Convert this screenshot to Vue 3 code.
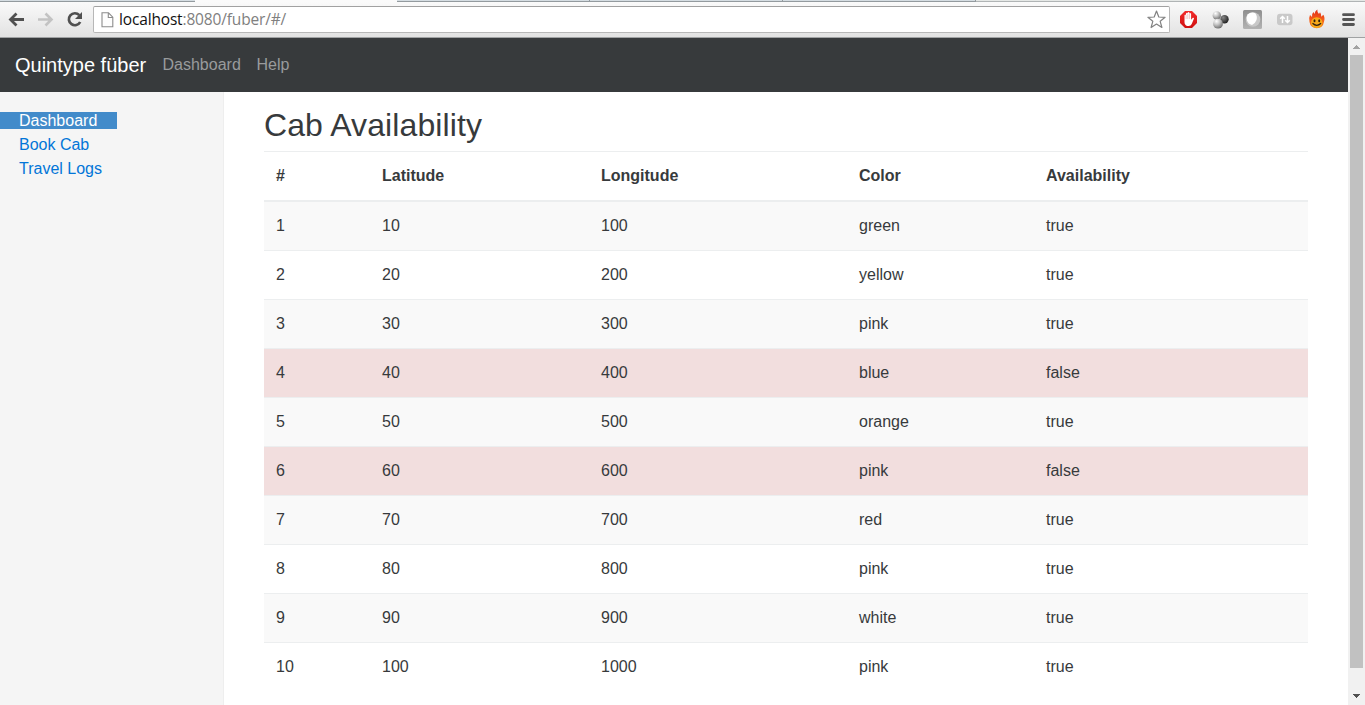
<script setup>
const columns = ['#', 'Latitude', 'Longitude', 'Color', 'Availability']
const colors = ['green', 'yellow', 'pink', 'blue', 'orange', 'pink', 'red', 'pink', 'white', 'pink']
const cabs = colors.map((color, i) => ({
  id: i + 1,
  lat: (i + 1) * 10,
  lng: (i + 1) * 100,
  color,
  available: color !== 'blue' && i !== 5
}))
const links = ['Dashboard', 'Book Cab', 'Travel Logs']
</script>

<template>
  <div class="window">
    <header class="chrome">
      <div class="tabs"><i class="tab first"></i><i class="gap"></i><i class="tab second"></i><i class="tab third"></i><i class="tab fourth"></i><i class="rest"></i></div>
      <div class="toolbar">
        <svg class="nav-icons" width="93" height="35" viewBox="0 3 93 35">
          <path d="M24 19.500H11.500M16.500 13.500l-6 6 6 6" fill="none" stroke="#505050" stroke-width="2.800" />
          <path d="M38 19.500h12.500M45.500 13.500l6 6-6 6" fill="none" stroke="#c3c3c3" stroke-width="2.600" />
          <path d="M79.300 15.200A6 6 0 1 0 80.200 22" fill="none" stroke="#505050" stroke-width="2.700" />
          <path d="M82 12v7h-7z" fill="#505050" />
        </svg>
        <div class="address">
          <svg class="page" width="13" height="16" viewBox="0 0 13 16">
            <path d="M1 .8h6.500l4.300 4.400v9.500H1zM7.300.8v4.700h4.500" fill="#fdfdfd" stroke="#8c8c8c" stroke-width="1.100" />
          </svg>
          <span class="url"><b>localhost</b>:8080/fuber/#/</span>
          <svg class="star" width="20" height="19" viewBox="0 0 20 19">
            <path d="M10.500 1l2.300 6 6.300.3-4.900 4 1.700 6.200-5.400-3.500-5.400 3.500 1.700-6.200-4.900-4 6.300-.3z" fill="#fff" stroke="#828282" stroke-width="1.200" stroke-linejoin="round" />
          </svg>
        </div>
        <svg class="extensions" width="195" height="35" viewBox="1170 3 195 35">
          <defs>
            <radialGradient id="ball" cx=".35" cy=".25" r=".8"><stop offset="0" stop-color="#fff" /><stop offset=".45" stop-color="#c4c4c4" /><stop offset="1" stop-color="#686868" /></radialGradient>
            <radialGradient id="dark" cx=".35" cy=".3" r=".7"><stop offset="0" stop-color="#888" /><stop offset="1" stop-color="#222" /></radialGradient>
            <linearGradient id="flame" x2="0" y2="1"><stop offset="0" stop-color="#e02c18" /><stop offset=".5" stop-color="#f3591b" /><stop offset="1" stop-color="#f58a16" /></linearGradient>
            <linearGradient id="tile" x2="0" y2="1"><stop offset="0" stop-color="#8f8f8f" /><stop offset="1" stop-color="#b3b3b3" /></linearGradient>
            <linearGradient id="stop" x2="0" y2="1"><stop offset="0" stop-color="#f22b2b" /><stop offset="1" stop-color="#cf1111" /></linearGradient>
          </defs>
          <path d="M1185 11h7l5 5v7l-5 5h-7l-5-5v-7z" fill="url(#stop)" />
          <path d="M1184.500 19.500v-4.300q.8-1.300 1.500 0v-1.700q.9-1.400 1.700 0v-.9q.9-1.300 1.700 0v1.100q.8-1.200 1.700 0v6l1.700-1.900q1.300-.4 1.200.8l-2.300 5.500q-.8 2-3 2h-1.500q-2.700-.8-2.700-4z" fill="#fff" />
          <path d="M1186.100 15v4m1.700-5v5m1.700-5v5" stroke="#e08080" stroke-width=".4" />
          <circle cx="1224.500" cy="19.300" r="4.200" fill="url(#dark)" />
          <circle cx="1216.800" cy="15.500" r="4.200" fill="url(#ball)" />
          <circle cx="1218" cy="23.700" r="4.900" fill="url(#ball)" />
          <rect x="1243" y="10" width="19" height="19" rx="1.500" fill="url(#tile)" />
          <circle cx="1253" cy="19.500" r="7.300" fill="#c8c8c8" />
          <path d="M1247.500 14.500q3.500-3 7.500-1.500 2.700 3 1.500 7-1.200 3.500-4.500 5-4-1-5-4.500-.8-3 .5-6z" fill="#fff" />
          <rect x="1277" y="13.700" width="15.500" height="11.500" rx="3" fill="#c9c9c9" />
          <path d="M1282.500 23v-6.500m-2.300 2.300 2.300-2.300 2.300 2.300M1287.500 16v6.500m-2.300-2.300 2.300 2.300 2.300-2.300" fill="none" stroke="#fff" stroke-width="1.500" />
          <path d="M1309.500 22q-1-4 .5-7l2 2q-.3-3.500 1.500-5l1 2q.3-3 2.800-4.500-.3 3 1.700 4.500l1-1.700q1.500 2 1.300 4.500l2-2q2 3 .7 7-1 6.300-7.300 6.500-6.200-.2-7.200-6.300z" fill="url(#flame)" />
          <ellipse cx="1316.700" cy="22.500" rx="5.700" ry="5.300" fill="#f8aa1a" />
          <ellipse cx="1314.500" cy="20.700" rx="1" ry="1.500" fill="#332010" /><ellipse cx="1319.200" cy="20.700" rx="1" ry="1.500" fill="#332010" />
          <path d="M1312.500 23.300q4.300 4 8.600 0" fill="none" stroke="#332010" stroke-width="1.200" />
          <path d="M1343.500 14.700h10M1343.500 19.500h10M1343.500 24.500h10" stroke="#555" stroke-width="2.800" stroke-linecap="round" />
        </svg>
      </div>
    </header>

    <div class="viewport">
      <div class="page-body">
        <nav class="navbar">
          <a class="brand">Quintype füber</a>
          <a class="nav-link dash">Dashboard</a>
          <a class="nav-link help">Help</a>
        </nav>
        <div class="columns">
          <aside class="sidebar">
            <div v-for="(link, i) in links" :key="link" class="side-item">
              <a :class="{ active: i === 0 }">{{ link }}</a>
            </div>
          </aside>
          <main class="main">
            <h2>Cab Availability</h2>
            <table>
              <colgroup><col class="c1" /><col class="c2" /><col class="c3" /><col class="c4" /><col class="c5" /></colgroup>
              <thead>
                <tr><th v-for="c in columns" :key="c">{{ c }}</th></tr>
              </thead>
              <tbody>
                <tr v-for="cab in cabs" :key="cab.id" :class="{ danger: !cab.available }">
                  <td>{{ cab.id }}</td>
                  <td>{{ cab.lat }}</td>
                  <td>{{ cab.lng }}</td>
                  <td>{{ cab.color }}</td>
                  <td>{{ cab.available }}</td>
                </tr>
              </tbody>
            </table>
          </main>
        </div>
      </div>
      <div class="scrollbar">
        <svg width="17" height="17" viewBox="0 0 17 17" shape-rendering="crispEdges"><path d="M5 11h7v-1h-1v-1h-1v-1h-1v-1h-1v1h-1v1h-1v1h-1z" fill="#a3a3a3" /></svg>
        <div class="thumb"></div>
        <svg class="down" width="17" height="17" viewBox="0 0 17 17" shape-rendering="crispEdges"><path d="M5 6h7v1h-1v1h-1v1h-1v1h-1v-1h-1v-1h-1v-1h-1z" fill="#505050" /></svg>
      </div>
    </div>
  </div>
</template>

<style>
body { margin: 0; overflow: hidden; }
</style>

<style scoped>
* { box-sizing: border-box; }
.window { width: 1365px; height: 705px; display: flex; flex-direction: column; overflow: hidden; background: #fff; color: #373a3c; font: 16px/24px "Liberation Sans", Arial, sans-serif; }
.chrome { height: 38px; flex: none; border-bottom: 1px solid #a0a2a3; background: linear-gradient(#fbfbfb, #e2e2e2); }
.tabs { display: flex; height: 2px; }
.tabs i { height: 2px; border-bottom: 1px solid #939a9e; background: #d5dde2; }
.tabs .first { width: 195px; }
.tabs .gap { width: 202px; border: 0; background: #fafafa; }
.tabs .second { width: 193px; border-right: 1px solid #939a9e; }
.tabs .third { width: 193px; border-right: 1px solid #939a9e; }
.tabs .fourth { width: 193px; border-right: 1px solid #939a9e; }
.tabs .rest { flex: 1; background: #e5e8e6; border-color: #b0b4b5; }
.toolbar { display: flex; height: 35px; padding-top: 1px; }
.nav-icons, .extensions { flex: none; display: block; }
.address { width: 1077px; height: 27px; margin-top: 3px; display: flex; align-items: center; padding: 0 3px 0 7px; border: 1px solid #b7b7b7; border-top-color: #a1a1a1; border-radius: 2px; background: #fff; }
.page { margin-right: 5px; }
.url { flex: 1; color: #808080; font: 15.5px/24px "Open Sans", "Noto Sans", sans-serif; letter-spacing: -0.16px; padding-bottom: 2px; white-space: nowrap; }
.url b { color: #111; font-weight: 400; }
.viewport { flex: 1; display: flex; min-height: 0; }
.page-body { width: 1348px; display: flex; flex-direction: column; }
.navbar { height: 54px; flex: none; display: flex; align-items: center; padding-left: 15px; background: #373a3c; }
.brand { color: #fff; font-size: 20px; width: 147.5px; white-space: nowrap; }
.nav-link { color: #999b9c; }
.dash { width: 94px; }
.columns { flex: 1; display: flex; }
.sidebar { width: 224px; padding-top: 17px; background: #f5f5f5; border-right: 1px solid #eee; }
.side-item { height: 24px; }
.side-item a { color: #0275d8; padding: 0 20px 0 19px; }
.side-item a.active { display: inline-block; line-height: 17px; width: 117px; height: 17px; color: #fff; background: #428bca; }
.main { padding: 15px 40px 0; }
h2 { margin: 0 0 8px; font-size: 32px; line-height: 36px; font-weight: 400; letter-spacing: 0.1px; }
table { width: 1044px; table-layout: fixed; border-collapse: collapse; }
.c1 { width: 106px; }
.c2 { width: 219px; }
.c3 { width: 258px; }
.c4 { width: 187px; }
.c5 { width: 274px; }
th, td { padding: 12px; text-align: left; line-height: 24px; border-top: 1px solid #eceeef; }
th { border-bottom: 2px solid #eceeef; }
tbody tr:nth-child(odd) { background: #f9f9f9; }
tbody tr.danger { background: #f2dede; }
.scrollbar { width: 17px; background: #f1f1f1; display: flex; flex-direction: column; align-items: center; }
.scrollbar svg { display: block; flex: none; }
.thumb { width: 13px; height: 613px; background: #c1c1c1; }
.down { margin-top: auto; }
</style>
